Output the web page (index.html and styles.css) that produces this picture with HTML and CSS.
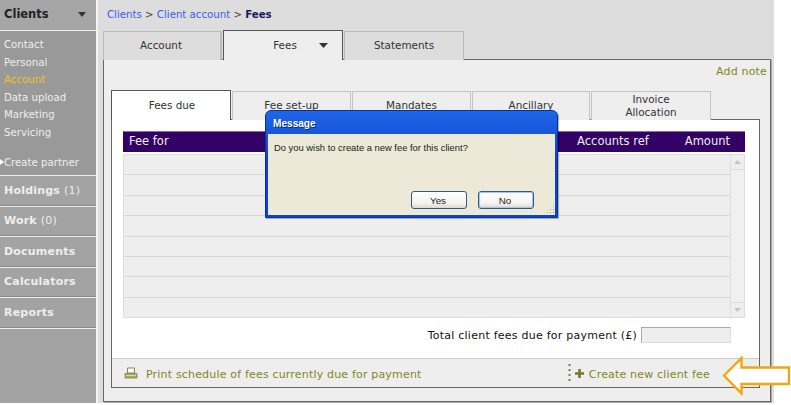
FILE: index.html
```html
<!DOCTYPE html>
<html lang="en">
<head>
<meta charset="utf-8">
<title>Fees</title>
<link rel="stylesheet" href="styles.css">
</head>
<body>
<div class="app">
  <aside class="sidebar">
    <div class="side-head"><span>Clients</span><svg class="caret" width="10" height="5" viewBox="0 0 10 5"><path d="M1 0h8L5 5z" fill="#333"/></svg></div>
    <ul class="side-list">
      <li>Contact</li>
      <li>Personal</li>
      <li class="current">Account</li>
      <li>Data upload</li>
      <li>Marketing</li>
      <li>Servicing</li>
      <li class="partner"><svg class="partner-mark" width="4" height="6" viewBox="0 0 4 6"><path d="M0 0l4 3-4 3z" fill="#fff"/></svg>Create partner</li>
    </ul>
    <div class="side-item"><b>Holdings</b> (1)</div>
    <div class="side-item"><b>Work</b> (0)</div>
    <div class="side-item"><b>Documents</b></div>
    <div class="side-item"><b>Calculators</b></div>
    <div class="side-item"><b>Reports</b></div>
    <div class="side-rest"></div>
  </aside>
  <main class="main">
    <nav class="crumbs"><a>Clients</a> <i>&gt;</i> <a>Client account</a> <i>&gt;</i> <b>Fees</b></nav>
    <div class="tabs">
      <div class="tab">Account</div>
      <div class="tab active"><span>Fees</span><svg class="tab-caret" width="9" height="5" viewBox="0 0 9 5"><path d="M0 0h9L4.500 5z" fill="#333"/></svg></div>
      <div class="tab">Statements</div>
    </div>
    <section class="panel">
      <div class="note-row"><a class="olive">Add note</a></div>
      <div class="subtabs">
        <div class="subtab active">Fees due</div>
        <div class="subtab">Fee set-up</div>
        <div class="subtab">Mandates</div>
        <div class="subtab narrow">Ancillary</div>
        <div class="subtab">Invoice<br>Allocation</div>
      </div>
      <div class="subpanel">
        <div class="table-wrap">
          <div class="thead"><span class="th-for">Fee for</span><span class="th-ref">Accounts ref</span><span class="th-amt">Amount</span></div>
          <div class="tbody">
            <div class="rows">
              <div class="row"></div><div class="row"></div><div class="row"></div><div class="row"></div>
              <div class="row"></div><div class="row"></div><div class="row"></div><div class="row"></div>
            </div>
            <div class="scrollbar">
              <div class="scroll-btn"><svg width="7" height="4" viewBox="0 0 7 4"><path d="M0 4h7L3.500 0z" fill="#c4c4c4"/></svg></div>
              <div class="scroll-btn"><svg width="7" height="4" viewBox="0 0 7 4"><path d="M0 0h7L3.500 4z" fill="#c4c4c4"/></svg></div>
            </div>
          </div>
          <div class="total"><span>Total client fees due for payment (£)</span><div class="total-box"></div></div>
        </div>
        <div class="foot">
          <svg class="print" width="14" height="12" viewBox="0 0 14 12"><path d="M3.500 1h7v5h-7z" fill="#fff" stroke="#8a8a3a"/><path d="M1 6.500h12v4.500H1z" fill="#a8a86a" stroke="#8f8f55"/><path d="M2 8.500h10" stroke="#d8d8b0"/></svg>
          <a class="olive foot-link">Print schedule of fees currently due for payment</a>
          <div class="create">
            <svg width="3" height="19" viewBox="0 0 3 19"><path d="M1.500 0v19" stroke="#777" stroke-width="2" stroke-dasharray="2 3"/></svg>
            <svg class="plus" width="9" height="9" viewBox="0 0 9 9"><path d="M3.200 0h2.600v3.200H9v2.600H5.800V9H3.200V5.800H0V3.200h3.200z" fill="#77772a"/></svg>
            <a class="olive foot-link">Create new client fee</a>
          </div>
        </div>
      </div>
    </section>
  </main>
  <div class="white-edge"></div>
</div>

<div class="dialog">
  <div class="dialog-title">Message</div>
  <div class="dialog-body">
    <p>Do you wish to create a new fee for this client?</p>
    <div class="dialog-actions">
      <button class="btn">Yes</button>
      <button class="btn focus">No</button>
    </div>
    <svg class="grip" width="10" height="10" viewBox="0 0 10 10"><path d="M8 1h1v1H8zM5 4h1v1H5zM8 4h1v1H8zM2 7h1v1H2zM5 7h1v1H5zM8 7h1v1H8z" fill="#a8a594"/></svg>
  </div>
</div>

<svg class="callout" width="69" height="40" viewBox="0 0 69 40"><path d="M2 19.500 19.500 2v9.500h47.500v16.500H19.500v9.500z" fill="#fff" stroke="#f0a80c" stroke-width="2.400"/></svg>
</body>
</html>
```
FILE: styles.css
```css
* { box-sizing: border-box; }
html, body { margin: 0; padding: 0; height: 405px; overflow: hidden; background: #fff; }
body { position: relative; font: 11px/13px "DejaVu Sans", Verdana, sans-serif; color: #222; }
.app { display: flex; height: 403px; }

.sidebar { width: 98px; flex: none; display: flex; flex-direction: column; border-right: 2px solid #f4f4f4; background: #a3a3a3; color: #f0f0f0; }
.side-head { height: 31px; flex: none; display: flex; align-items: center; justify-content: space-between; padding: 0 9px 2px 4px; background: #a6a6a6; border-bottom: 1px solid #eee; font-weight: bold; color: #222; font-size: 11.500px; }
.side-list { list-style: none; margin: 0; padding: 5px 0 0; height: 145px; flex: none; background: #999; border-bottom: 1px solid #eee; font-size: 10.200px; }
.side-list li { height: 17.500px; line-height: 17px; padding-left: 4px; color: #eee; }
.side-list .current { color: #f0c419; }
.side-list .partner { margin-top: 12.500px; display: flex; align-items: center; padding-left: 0; }
.partner-mark { flex: none; }
.side-item { height: 30.500px; flex: none; display: flex; align-items: center; gap: 4px; padding: 0 4px 1px; background: #a3a3a3; border-bottom: 1px solid #eee; box-shadow: inset 0 -1px 0 #8a8a8a; color: #eee; letter-spacing: .2px; }
.side-rest { flex: 1; background: #a3a3a3; }

.main { width: 676px; flex: none; background: #ddd; padding-left: 5px; display: flex; flex-direction: column; }
.crumbs { height: 30px; flex: none; padding: 8px 0 0 4px; font-size: 10.200px; }
.crumbs a { color: #3a5cf0; }
.crumbs i { font-style: normal; color: #444; }
.crumbs b { color: #1a1a66; }

.tabs { display: flex; gap: 1px; height: 30px; flex: none; align-items: flex-end; position: relative; z-index: 1; margin-bottom: -1px; }
.tab { width: 120px; height: 29px; display: flex; align-items: center; justify-content: center; background: #ddd; border: 1px solid #bbb; border-bottom: 0; padding-bottom: 1px; color: #333; font-size: 10.400px; }
.tab:first-child { width: 119px; border-right-width: 2px; padding-right: 2px; }
.tab.active { height: 30px; background: #eee; border-color: #555; position: relative; }
.tab.active span { margin-left: 4px; }
.tab-caret { position: absolute; left: 95px; top: 12px; }

.panel { width: 668px; height: 343px; flex: none; background: #eee; border: 1px solid #666; box-shadow: 1px 1px 0 #aaa; padding: 0 9px 0 7px; }
.note-row { height: 30px; display: flex; justify-content: flex-end; align-items: flex-start; padding-top: 5px; margin-right: -6px; }
.olive { color: #85851c; letter-spacing: .18px; }

.subtabs { display: flex; gap: 1px; height: 30px; align-items: flex-end; margin-bottom: -1px; position: relative; z-index: 1; }
.subtab { width: 119px; height: 29px; display: flex; align-items: center; justify-content: center; text-align: center; border: 1px solid #c4c4c4; border-bottom: 0; background: #eee; color: #333; font-size: 10.400px; padding-bottom: 1px; }
.subtab.narrow { width: 118px; }
.subtab:last-child { width: 120px; padding-bottom: 0; }
.subtab.active { width: 120px; height: 30px; background: #fff; border-color: #555; padding: 0 0 1px 2px; }

.subpanel { width: 649px; height: 269px; background: #fff; border: 1px solid #666; display: flex; flex-direction: column; }
.table-wrap { flex: 1; padding: 11px 14px 0 11px; }
.thead { height: 21px; background: #330066; box-shadow: inset 0 1px 0 #8a70a8; color: #eee; display: flex; align-items: center; font-size: 11.500px; }
.th-for { margin-left: 6px; }
.th-ref { margin-left: auto; margin-right: 36px; }
.th-amt { margin-right: 15px; }
.tbody { height: 164px; margin-top: 2px; display: flex; border: 1px solid #ddd; background: #eee; }
.rows { flex: 1; display: flex; flex-direction: column; }
.row { flex: 1; border-bottom: 1px solid #d8d8d8; }
.row:last-child { border-bottom: 0; }
.scrollbar { width: 14px; flex: none; display: flex; flex-direction: column; justify-content: space-between; border-left: 1px solid #ddd; background: #f0f0f0; }
.scroll-btn { height: 14px; display: flex; align-items: center; justify-content: center; background: #eee; box-shadow: 0 1px 0 #ddd, 0 -1px 0 #ddd; }
.total { display: flex; justify-content: flex-end; align-items: center; gap: 4px; padding: 9px 14px 0 0; color: #111; letter-spacing: .24px; }
.total-box { width: 90px; height: 16px; background: #eee; border: 1px solid #ddd; border-top-color: #aaa; border-left-color: #aaa; }

.foot { height: 29px; flex: none; display: flex; align-items: center; padding: 0 49px 0 12px; background: #eee; border-top: 1px solid #ccc; }
.foot-link { padding-top: 2px; }
.print { margin-right: 8px; }
.create { margin-left: auto; display: flex; align-items: center; gap: 4px; }
.plus { margin-right: 1px; }

.dialog { position: absolute; z-index: 5; left: 265px; top: 110px; width: 293px; height: 108px; background: linear-gradient(#1f66e6, #0a3fc8 50%, #0a45d2); border: 1px solid #0a2f9e; border-radius: 6px 6px 0 0; display: flex; flex-direction: column; padding: 0 2px 2px; box-shadow: 1px 1px 1px rgba(0,0,0,.3); }
.dialog-title { height: 23px; flex: none; display: flex; align-items: center; padding: 2px 0 0 5px; color: #fff; font: bold 10.100px "Liberation Sans", Arial, sans-serif; text-shadow: 1px 1px 0 #0a2a90; }
.dialog-body { flex: 1; background: #ece9d8; position: relative; padding: 7px 6px; font: 9.400px/13px "Liberation Sans", Arial, sans-serif; color: #222; }
.dialog-body p { margin: 0; }
.dialog-actions { position: absolute; right: 21px; bottom: 6px; display: flex; gap: 11px; }
.btn { width: 56px; height: 18px; padding: 0 2px 0 0; font: 9.800px "Liberation Sans", Arial, sans-serif; color: #222; background: linear-gradient(#fff, #f4f3ee 70%, #dcd8cc); border: 1px solid #2f5a88; border-radius: 3px; }
.btn.focus { box-shadow: inset 0 0 0 1px #a8c4ee; }
.grip { position: absolute; right: 0; bottom: 0; }

.callout { position: absolute; z-index: 6; left: 722px; top: 356px; }
```
